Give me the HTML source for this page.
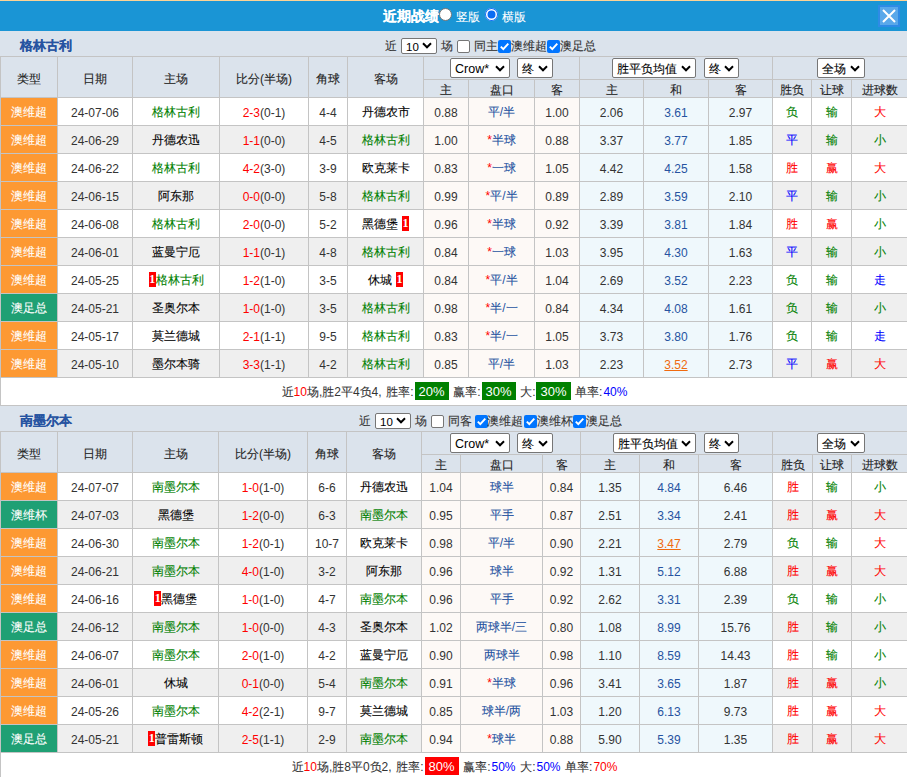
<!DOCTYPE html><html><head><meta charset="utf-8"><style>
*{margin:0;padding:0;box-sizing:border-box}
html,body{width:907px;height:777px;overflow:hidden;background:#fff}
body{position:relative;font-family:"Liberation Sans",sans-serif;font-size:12px;color:#333}
.a{position:absolute}
.k{-webkit-text-stroke:0.1px currentColor}
.c{width:100%;height:100%;display:flex;align-items:center;justify-content:center;white-space:nowrap;padding-top:2px}
.h .c{padding-top:3px}
.t{position:absolute;white-space:nowrap;line-height:14px}
.sel{position:absolute;background:#fff;border:1px solid #767676;border-radius:2px;color:#000;white-space:nowrap;line-height:16px;overflow:hidden}
.sel .st{position:absolute;left:5px;top:0}
.chev{position:absolute}
.cbu{position:absolute;width:13px;height:13px;border:1px solid #767676;border-radius:2px;background:#fff}
.cbc{position:absolute;width:13px;height:13px;border-radius:2px;background:#0075ff}
.cbc svg{position:absolute;left:0;top:0}
.g{color:#008000}.r{color:#f00}.b{color:#0000ff}.hb{color:#2653a1}
.nb{display:inline-block;background:#f00;color:#fff;width:7px;height:15px;line-height:15px;text-align:center;font-family:"Liberation Serif",serif;font-size:12px;font-weight:bold;vertical-align:top;overflow:hidden;text-indent:0.5px}
</style></head><body>

<div class="a" style="left:0px;top:0px;width:907px;height:1px;background:#fcd395;"></div>
<div class="a" style="left:0px;top:1px;width:907px;height:30px;background:#1a95d5;"></div>
<div class="t" style="left:383px;top:9px;color:#fff;font-weight:bold;font-size:14px;line-height:15px;-webkit-text-stroke:0.2px #fff"><span class="k">近期战绩</span></div>
<div class="a" style="left:439px;top:8px;width:13px;height:13px;border-radius:50%;background:#fff;border:1px solid #767676"></div>
<div class="t" style="left:456px;top:10px;color:#fff;font-size:12px"><span class="k">竖版</span></div>
<div class="a" style="left:485px;top:8px;width:13px;height:13px;border-radius:50%;background:#0b6cf3;box-shadow:inset 0 0 0 1px #0b6cf3, inset 0 0 0 2.5px #fff"></div>
<div class="t" style="left:502px;top:10px;color:#fff;font-size:12px"><span class="k">横版</span></div>
<div class="a" style="left:878px;top:5px;width:22px;height:22px;background:#5aa8ea;border:2px solid #2e8be6"></div>
<svg class="a" style="left:878px;top:5px" width="22" height="22" viewBox="0 0 22 22"><path d="M5 5 L17 17 M17 5 L5 17" stroke="#fff" stroke-width="2"/></svg>
<div class="a" style="left:0px;top:31px;width:907px;height:25px;background:#dbe3ec;"></div>
<div class="t" style="left:20px;top:38px;color:#2653a1;font-weight:bold;font-size:13px;line-height:15px"><span class="k">格林古利</span></div>
<div class="t" style="left:385px;top:39px;"><span class="k">近</span></div>
<div class="sel s10" style="left:401px;top:38px;width:36px;height:16px;font-size:11.5px"><span class="st" style="left:4px;top:0px;font-family:"Liberation Serif",serif">10</span><svg class="chev" width="10" height="7" viewBox="0 0 10 7" style="left:20px;top:3px"><path d="M1 1.3 L5 5.3 L9 1.3" fill="none" stroke="#000" stroke-width="2"/></svg></div>
<div class="t" style="left:441px;top:39px;"><span class="k">场</span></div>
<div class="cbu" style="left:457px;top:40px"></div>
<div class="t" style="left:474px;top:39px;"><span class="k">同主</span></div>
<div class="cbc" style="left:498px;top:40px"><svg width="13" height="13" viewBox="0 0 13 13"><path d="M2.8 6.6 L5.3 9.2 L10.3 3.6" fill="none" stroke="#fff" stroke-width="1.9"/></svg></div>
<div class="t" style="left:511px;top:39px;"><span class="k">澳维超</span></div>
<div class="cbc" style="left:547px;top:40px"><svg width="13" height="13" viewBox="0 0 13 13"><path d="M2.8 6.6 L5.3 9.2 L10.3 3.6" fill="none" stroke="#fff" stroke-width="1.9"/></svg></div>
<div class="t" style="left:560px;top:39px;"><span class="k">澳足总</span></div>
<div class="a" style="left:0px;top:56px;width:907px;height:350px;background:#c4c4c4;"></div>
<div class="a" style="left:1px;top:57px;width:56px;height:40px;background:#dbe3ec;"><div class="c" style="padding-top:4px"><span><span style="color:#222"><span class="k">类型</span></span></span></div></div>
<div class="a" style="left:58px;top:57px;width:74px;height:40px;background:#dbe3ec;"><div class="c" style="padding-top:4px"><span><span style="color:#222"><span class="k">日期</span></span></span></div></div>
<div class="a" style="left:133px;top:57px;width:86px;height:40px;background:#dbe3ec;"><div class="c" style="padding-top:4px"><span><span style="color:#222"><span class="k">主场</span></span></span></div></div>
<div class="a" style="left:220px;top:57px;width:88px;height:40px;background:#dbe3ec;"><div class="c" style="padding-top:4px"><span><span style="color:#222"><span class="k">比分</span>(<span class="k">半场</span>)</span></span></div></div>
<div class="a" style="left:309px;top:57px;width:38px;height:40px;background:#dbe3ec;"><div class="c" style="padding-top:4px"><span><span style="color:#222"><span class="k">角球</span></span></span></div></div>
<div class="a" style="left:348px;top:57px;width:75px;height:40px;background:#dbe3ec;"><div class="c" style="padding-top:4px"><span><span style="color:#222"><span class="k">客场</span></span></span></div></div>
<div class="a" style="left:424px;top:57px;width:155px;height:22px;background:#dbe3ec;"><div class="c" style="padding-top:2px"><span></span></div></div>
<div class="a" style="left:580px;top:57px;width:192px;height:22px;background:#dbe3ec;"><div class="c" style="padding-top:2px"><span></span></div></div>
<div class="a" style="left:773px;top:57px;width:135px;height:22px;background:#dbe3ec;"><div class="c" style="padding-top:2px"><span></span></div></div>
<div class="a" style="left:424px;top:80px;width:44px;height:17px;background:#dbe3ec;"><div class="c" style="padding-top:3px"><span><span style="color:#222"><span class="k">主</span></span></span></div></div>
<div class="a" style="left:469px;top:80px;width:65px;height:17px;background:#dbe3ec;"><div class="c" style="padding-top:3px"><span><span style="color:#222"><span class="k">盘口</span></span></span></div></div>
<div class="a" style="left:535px;top:80px;width:44px;height:17px;background:#dbe3ec;"><div class="c" style="padding-top:3px"><span><span style="color:#222"><span class="k">客</span></span></span></div></div>
<div class="a" style="left:580px;top:80px;width:63px;height:17px;background:#dbe3ec;"><div class="c" style="padding-top:3px"><span><span style="color:#222"><span class="k">主</span></span></span></div></div>
<div class="a" style="left:644px;top:80px;width:64px;height:17px;background:#dbe3ec;"><div class="c" style="padding-top:3px"><span><span style="color:#222"><span class="k">和</span></span></span></div></div>
<div class="a" style="left:709px;top:80px;width:63px;height:17px;background:#dbe3ec;"><div class="c" style="padding-top:3px"><span><span style="color:#222"><span class="k">客</span></span></span></div></div>
<div class="a" style="left:773px;top:80px;width:38px;height:17px;background:#dbe3ec;"><div class="c" style="padding-top:3px"><span><span style="color:#222"><span class="k">胜负</span></span></span></div></div>
<div class="a" style="left:812px;top:80px;width:39px;height:17px;background:#dbe3ec;"><div class="c" style="padding-top:3px"><span><span style="color:#222"><span class="k">让球</span></span></span></div></div>
<div class="a" style="left:852px;top:80px;width:56px;height:17px;background:#dbe3ec;"><div class="c" style="padding-top:3px"><span><span style="color:#222"><span class="k">进球数</span></span></span></div></div>
<div class="sel" style="left:450px;top:58px;width:60px;height:20px;font-size:12.5px"><span class="st" style="left:4px;top:2px;">Crow*</span><svg class="chev" width="10" height="7" viewBox="0 0 10 7" style="left:44px;top:6px"><path d="M1 1.3 L5 5.3 L9 1.3" fill="none" stroke="#000" stroke-width="2"/></svg></div>
<div class="sel" style="left:517px;top:58px;width:36px;height:20px;font-size:12px"><span class="st" style="left:4px;top:1.5px;"><span class="k">终</span></span><svg class="chev" width="10" height="7" viewBox="0 0 10 7" style="left:20px;top:6px"><path d="M1 1.3 L5 5.3 L9 1.3" fill="none" stroke="#000" stroke-width="2"/></svg></div>
<div class="sel" style="left:612px;top:58px;width:84px;height:20px;font-size:12px"><span class="st" style="left:4px;top:1.5px;"><span class="k">胜平负均值</span></span><svg class="chev" width="10" height="7" viewBox="0 0 10 7" style="left:68px;top:6px"><path d="M1 1.3 L5 5.3 L9 1.3" fill="none" stroke="#000" stroke-width="2"/></svg></div>
<div class="sel" style="left:704px;top:58px;width:35px;height:20px;font-size:12px"><span class="st" style="left:4px;top:1.5px;"><span class="k">终</span></span><svg class="chev" width="10" height="7" viewBox="0 0 10 7" style="left:19px;top:6px"><path d="M1 1.3 L5 5.3 L9 1.3" fill="none" stroke="#000" stroke-width="2"/></svg></div>
<div class="sel" style="left:817px;top:58px;width:48px;height:20px;font-size:12px"><span class="st" style="left:4px;top:1.5px;"><span class="k">全场</span></span><svg class="chev" width="10" height="7" viewBox="0 0 10 7" style="left:32px;top:6px"><path d="M1 1.3 L5 5.3 L9 1.3" fill="none" stroke="#000" stroke-width="2"/></svg></div>
<div class="a" style="left:1px;top:98px;width:56px;height:27px;background:#fd9933;"><div class="c" style="padding-top:2px"><span><span style="color:#fff"><span class="k">澳维超</span></span></span></div></div>
<div class="a" style="left:58px;top:98px;width:74px;height:27px;background:#ffffff;"><div class="c" style="padding-top:2px"><span>24-07-06</span></div></div>
<div class="a" style="left:133px;top:98px;width:86px;height:27px;background:#ffffff;"><div class="c" style="padding-top:2px"><span><span class="g"><span class="k">格林古利</span></span></span></div></div>
<div class="a" style="left:220px;top:98px;width:88px;height:27px;background:#ffffff;"><div class="c" style="padding-top:2px"><span><span class="r">2-3</span>(0-1)</span></div></div>
<div class="a" style="left:309px;top:98px;width:38px;height:27px;background:#ffffff;"><div class="c" style="padding-top:2px"><span>4-4</span></div></div>
<div class="a" style="left:348px;top:98px;width:75px;height:27px;background:#ffffff;"><div class="c" style="padding-top:2px"><span><span style="color:#000"><span class="k">丹德农市</span></span></span></div></div>
<div class="a" style="left:424px;top:98px;width:44px;height:27px;background:#fdf9f6;"><div class="c" style="padding-top:2px"><span>0.88</span></div></div>
<div class="a" style="left:469px;top:98px;width:65px;height:27px;background:#fdf9f6;"><div class="c" style="padding-top:2px"><span><span class="hb"><span class="k">平</span>/<span class="k">半</span></span></span></div></div>
<div class="a" style="left:535px;top:98px;width:44px;height:27px;background:#fdf9f6;"><div class="c" style="padding-top:2px"><span>1.00</span></div></div>
<div class="a" style="left:580px;top:98px;width:63px;height:27px;background:#eff8fc;"><div class="c" style="padding-top:2px"><span>2.06</span></div></div>
<div class="a" style="left:644px;top:98px;width:64px;height:27px;background:#eff8fc;"><div class="c" style="padding-top:2px"><span><span class="hb">3.61</span></span></div></div>
<div class="a" style="left:709px;top:98px;width:63px;height:27px;background:#eff8fc;"><div class="c" style="padding-top:2px"><span>2.97</span></div></div>
<div class="a" style="left:773px;top:98px;width:38px;height:27px;background:#ffffff;"><div class="c" style="padding-top:2px"><span><span class="g"><span class="k">负</span></span></span></div></div>
<div class="a" style="left:812px;top:98px;width:39px;height:27px;background:#ffffff;"><div class="c" style="padding-top:2px"><span><span class="g"><span class="k">输</span></span></span></div></div>
<div class="a" style="left:852px;top:98px;width:56px;height:27px;background:#ffffff;"><div class="c" style="padding-top:2px"><span><span class="r"><span class="k">大</span></span></span></div></div>
<div class="a" style="left:1px;top:126px;width:56px;height:27px;background:#fd9933;"><div class="c" style="padding-top:2px"><span><span style="color:#fff"><span class="k">澳维超</span></span></span></div></div>
<div class="a" style="left:58px;top:126px;width:74px;height:27px;background:#efefef;"><div class="c" style="padding-top:2px"><span>24-06-29</span></div></div>
<div class="a" style="left:133px;top:126px;width:86px;height:27px;background:#efefef;"><div class="c" style="padding-top:2px"><span><span style="color:#000"><span class="k">丹德农迅</span></span></span></div></div>
<div class="a" style="left:220px;top:126px;width:88px;height:27px;background:#efefef;"><div class="c" style="padding-top:2px"><span><span class="r">1-1</span>(0-0)</span></div></div>
<div class="a" style="left:309px;top:126px;width:38px;height:27px;background:#efefef;"><div class="c" style="padding-top:2px"><span>4-5</span></div></div>
<div class="a" style="left:348px;top:126px;width:75px;height:27px;background:#efefef;"><div class="c" style="padding-top:2px"><span><span class="g"><span class="k">格林古利</span></span></span></div></div>
<div class="a" style="left:424px;top:126px;width:44px;height:27px;background:#fdf9f6;"><div class="c" style="padding-top:2px"><span>1.00</span></div></div>
<div class="a" style="left:469px;top:126px;width:65px;height:27px;background:#fdf9f6;"><div class="c" style="padding-top:2px"><span><span class="r">*</span><span class="hb"><span class="k">半球</span></span></span></div></div>
<div class="a" style="left:535px;top:126px;width:44px;height:27px;background:#fdf9f6;"><div class="c" style="padding-top:2px"><span>0.88</span></div></div>
<div class="a" style="left:580px;top:126px;width:63px;height:27px;background:#eff8fc;"><div class="c" style="padding-top:2px"><span>3.37</span></div></div>
<div class="a" style="left:644px;top:126px;width:64px;height:27px;background:#eff8fc;"><div class="c" style="padding-top:2px"><span><span class="hb">3.77</span></span></div></div>
<div class="a" style="left:709px;top:126px;width:63px;height:27px;background:#eff8fc;"><div class="c" style="padding-top:2px"><span>1.85</span></div></div>
<div class="a" style="left:773px;top:126px;width:38px;height:27px;background:#efefef;"><div class="c" style="padding-top:2px"><span><span class="b"><span class="k">平</span></span></span></div></div>
<div class="a" style="left:812px;top:126px;width:39px;height:27px;background:#efefef;"><div class="c" style="padding-top:2px"><span><span class="g"><span class="k">输</span></span></span></div></div>
<div class="a" style="left:852px;top:126px;width:56px;height:27px;background:#efefef;"><div class="c" style="padding-top:2px"><span><span class="g"><span class="k">小</span></span></span></div></div>
<div class="a" style="left:1px;top:154px;width:56px;height:27px;background:#fd9933;"><div class="c" style="padding-top:2px"><span><span style="color:#fff"><span class="k">澳维超</span></span></span></div></div>
<div class="a" style="left:58px;top:154px;width:74px;height:27px;background:#ffffff;"><div class="c" style="padding-top:2px"><span>24-06-22</span></div></div>
<div class="a" style="left:133px;top:154px;width:86px;height:27px;background:#ffffff;"><div class="c" style="padding-top:2px"><span><span class="g"><span class="k">格林古利</span></span></span></div></div>
<div class="a" style="left:220px;top:154px;width:88px;height:27px;background:#ffffff;"><div class="c" style="padding-top:2px"><span><span class="r">4-2</span>(3-0)</span></div></div>
<div class="a" style="left:309px;top:154px;width:38px;height:27px;background:#ffffff;"><div class="c" style="padding-top:2px"><span>3-9</span></div></div>
<div class="a" style="left:348px;top:154px;width:75px;height:27px;background:#ffffff;"><div class="c" style="padding-top:2px"><span><span style="color:#000"><span class="k">欧克莱卡</span></span></span></div></div>
<div class="a" style="left:424px;top:154px;width:44px;height:27px;background:#fdf9f6;"><div class="c" style="padding-top:2px"><span>0.83</span></div></div>
<div class="a" style="left:469px;top:154px;width:65px;height:27px;background:#fdf9f6;"><div class="c" style="padding-top:2px"><span><span class="r">*</span><span class="hb"><span class="k">一球</span></span></span></div></div>
<div class="a" style="left:535px;top:154px;width:44px;height:27px;background:#fdf9f6;"><div class="c" style="padding-top:2px"><span>1.05</span></div></div>
<div class="a" style="left:580px;top:154px;width:63px;height:27px;background:#eff8fc;"><div class="c" style="padding-top:2px"><span>4.42</span></div></div>
<div class="a" style="left:644px;top:154px;width:64px;height:27px;background:#eff8fc;"><div class="c" style="padding-top:2px"><span><span class="hb">4.25</span></span></div></div>
<div class="a" style="left:709px;top:154px;width:63px;height:27px;background:#eff8fc;"><div class="c" style="padding-top:2px"><span>1.58</span></div></div>
<div class="a" style="left:773px;top:154px;width:38px;height:27px;background:#ffffff;"><div class="c" style="padding-top:2px"><span><span class="r"><span class="k">胜</span></span></span></div></div>
<div class="a" style="left:812px;top:154px;width:39px;height:27px;background:#ffffff;"><div class="c" style="padding-top:2px"><span><span class="r"><span class="k">赢</span></span></span></div></div>
<div class="a" style="left:852px;top:154px;width:56px;height:27px;background:#ffffff;"><div class="c" style="padding-top:2px"><span><span class="r"><span class="k">大</span></span></span></div></div>
<div class="a" style="left:1px;top:182px;width:56px;height:27px;background:#fd9933;"><div class="c" style="padding-top:2px"><span><span style="color:#fff"><span class="k">澳维超</span></span></span></div></div>
<div class="a" style="left:58px;top:182px;width:74px;height:27px;background:#efefef;"><div class="c" style="padding-top:2px"><span>24-06-15</span></div></div>
<div class="a" style="left:133px;top:182px;width:86px;height:27px;background:#efefef;"><div class="c" style="padding-top:2px"><span><span style="color:#000"><span class="k">阿东那</span></span></span></div></div>
<div class="a" style="left:220px;top:182px;width:88px;height:27px;background:#efefef;"><div class="c" style="padding-top:2px"><span><span class="r">0-0</span>(0-0)</span></div></div>
<div class="a" style="left:309px;top:182px;width:38px;height:27px;background:#efefef;"><div class="c" style="padding-top:2px"><span>5-8</span></div></div>
<div class="a" style="left:348px;top:182px;width:75px;height:27px;background:#efefef;"><div class="c" style="padding-top:2px"><span><span class="g"><span class="k">格林古利</span></span></span></div></div>
<div class="a" style="left:424px;top:182px;width:44px;height:27px;background:#fdf9f6;"><div class="c" style="padding-top:2px"><span>0.99</span></div></div>
<div class="a" style="left:469px;top:182px;width:65px;height:27px;background:#fdf9f6;"><div class="c" style="padding-top:2px"><span><span class="r">*</span><span class="hb"><span class="k">平</span>/<span class="k">半</span></span></span></div></div>
<div class="a" style="left:535px;top:182px;width:44px;height:27px;background:#fdf9f6;"><div class="c" style="padding-top:2px"><span>0.89</span></div></div>
<div class="a" style="left:580px;top:182px;width:63px;height:27px;background:#eff8fc;"><div class="c" style="padding-top:2px"><span>2.89</span></div></div>
<div class="a" style="left:644px;top:182px;width:64px;height:27px;background:#eff8fc;"><div class="c" style="padding-top:2px"><span><span class="hb">3.59</span></span></div></div>
<div class="a" style="left:709px;top:182px;width:63px;height:27px;background:#eff8fc;"><div class="c" style="padding-top:2px"><span>2.10</span></div></div>
<div class="a" style="left:773px;top:182px;width:38px;height:27px;background:#efefef;"><div class="c" style="padding-top:2px"><span><span class="b"><span class="k">平</span></span></span></div></div>
<div class="a" style="left:812px;top:182px;width:39px;height:27px;background:#efefef;"><div class="c" style="padding-top:2px"><span><span class="g"><span class="k">输</span></span></span></div></div>
<div class="a" style="left:852px;top:182px;width:56px;height:27px;background:#efefef;"><div class="c" style="padding-top:2px"><span><span class="g"><span class="k">小</span></span></span></div></div>
<div class="a" style="left:1px;top:210px;width:56px;height:27px;background:#fd9933;"><div class="c" style="padding-top:2px"><span><span style="color:#fff"><span class="k">澳维超</span></span></span></div></div>
<div class="a" style="left:58px;top:210px;width:74px;height:27px;background:#ffffff;"><div class="c" style="padding-top:2px"><span>24-06-08</span></div></div>
<div class="a" style="left:133px;top:210px;width:86px;height:27px;background:#ffffff;"><div class="c" style="padding-top:2px"><span><span class="g"><span class="k">格林古利</span></span></span></div></div>
<div class="a" style="left:220px;top:210px;width:88px;height:27px;background:#ffffff;"><div class="c" style="padding-top:2px"><span><span class="r">2-0</span>(0-0)</span></div></div>
<div class="a" style="left:309px;top:210px;width:38px;height:27px;background:#ffffff;"><div class="c" style="padding-top:2px"><span>5-2</span></div></div>
<div class="a" style="left:348px;top:210px;width:75px;height:27px;background:#ffffff;"><div class="c" style="padding-top:2px"><span><span style="color:#000"><span class="k">黑德堡</span> <span class="nb">1</span></span></span></div></div>
<div class="a" style="left:424px;top:210px;width:44px;height:27px;background:#fdf9f6;"><div class="c" style="padding-top:2px"><span>0.96</span></div></div>
<div class="a" style="left:469px;top:210px;width:65px;height:27px;background:#fdf9f6;"><div class="c" style="padding-top:2px"><span><span class="r">*</span><span class="hb"><span class="k">半球</span></span></span></div></div>
<div class="a" style="left:535px;top:210px;width:44px;height:27px;background:#fdf9f6;"><div class="c" style="padding-top:2px"><span>0.92</span></div></div>
<div class="a" style="left:580px;top:210px;width:63px;height:27px;background:#eff8fc;"><div class="c" style="padding-top:2px"><span>3.39</span></div></div>
<div class="a" style="left:644px;top:210px;width:64px;height:27px;background:#eff8fc;"><div class="c" style="padding-top:2px"><span><span class="hb">3.81</span></span></div></div>
<div class="a" style="left:709px;top:210px;width:63px;height:27px;background:#eff8fc;"><div class="c" style="padding-top:2px"><span>1.84</span></div></div>
<div class="a" style="left:773px;top:210px;width:38px;height:27px;background:#ffffff;"><div class="c" style="padding-top:2px"><span><span class="r"><span class="k">胜</span></span></span></div></div>
<div class="a" style="left:812px;top:210px;width:39px;height:27px;background:#ffffff;"><div class="c" style="padding-top:2px"><span><span class="r"><span class="k">赢</span></span></span></div></div>
<div class="a" style="left:852px;top:210px;width:56px;height:27px;background:#ffffff;"><div class="c" style="padding-top:2px"><span><span class="g"><span class="k">小</span></span></span></div></div>
<div class="a" style="left:1px;top:238px;width:56px;height:27px;background:#fd9933;"><div class="c" style="padding-top:2px"><span><span style="color:#fff"><span class="k">澳维超</span></span></span></div></div>
<div class="a" style="left:58px;top:238px;width:74px;height:27px;background:#efefef;"><div class="c" style="padding-top:2px"><span>24-06-01</span></div></div>
<div class="a" style="left:133px;top:238px;width:86px;height:27px;background:#efefef;"><div class="c" style="padding-top:2px"><span><span style="color:#000"><span class="k">蓝曼宁厄</span></span></span></div></div>
<div class="a" style="left:220px;top:238px;width:88px;height:27px;background:#efefef;"><div class="c" style="padding-top:2px"><span><span class="r">1-1</span>(0-1)</span></div></div>
<div class="a" style="left:309px;top:238px;width:38px;height:27px;background:#efefef;"><div class="c" style="padding-top:2px"><span>4-8</span></div></div>
<div class="a" style="left:348px;top:238px;width:75px;height:27px;background:#efefef;"><div class="c" style="padding-top:2px"><span><span class="g"><span class="k">格林古利</span></span></span></div></div>
<div class="a" style="left:424px;top:238px;width:44px;height:27px;background:#fdf9f6;"><div class="c" style="padding-top:2px"><span>0.84</span></div></div>
<div class="a" style="left:469px;top:238px;width:65px;height:27px;background:#fdf9f6;"><div class="c" style="padding-top:2px"><span><span class="r">*</span><span class="hb"><span class="k">一球</span></span></span></div></div>
<div class="a" style="left:535px;top:238px;width:44px;height:27px;background:#fdf9f6;"><div class="c" style="padding-top:2px"><span>1.03</span></div></div>
<div class="a" style="left:580px;top:238px;width:63px;height:27px;background:#eff8fc;"><div class="c" style="padding-top:2px"><span>3.95</span></div></div>
<div class="a" style="left:644px;top:238px;width:64px;height:27px;background:#eff8fc;"><div class="c" style="padding-top:2px"><span><span class="hb">4.30</span></span></div></div>
<div class="a" style="left:709px;top:238px;width:63px;height:27px;background:#eff8fc;"><div class="c" style="padding-top:2px"><span>1.63</span></div></div>
<div class="a" style="left:773px;top:238px;width:38px;height:27px;background:#efefef;"><div class="c" style="padding-top:2px"><span><span class="b"><span class="k">平</span></span></span></div></div>
<div class="a" style="left:812px;top:238px;width:39px;height:27px;background:#efefef;"><div class="c" style="padding-top:2px"><span><span class="g"><span class="k">输</span></span></span></div></div>
<div class="a" style="left:852px;top:238px;width:56px;height:27px;background:#efefef;"><div class="c" style="padding-top:2px"><span><span class="g"><span class="k">小</span></span></span></div></div>
<div class="a" style="left:1px;top:266px;width:56px;height:27px;background:#fd9933;"><div class="c" style="padding-top:2px"><span><span style="color:#fff"><span class="k">澳维超</span></span></span></div></div>
<div class="a" style="left:58px;top:266px;width:74px;height:27px;background:#ffffff;"><div class="c" style="padding-top:2px"><span>24-05-25</span></div></div>
<div class="a" style="left:133px;top:266px;width:86px;height:27px;background:#ffffff;"><div class="c" style="padding-top:2px"><span><span class="nb">1</span><span class="g"><span class="k">格林古利</span></span></span></div></div>
<div class="a" style="left:220px;top:266px;width:88px;height:27px;background:#ffffff;"><div class="c" style="padding-top:2px"><span><span class="r">1-2</span>(1-0)</span></div></div>
<div class="a" style="left:309px;top:266px;width:38px;height:27px;background:#ffffff;"><div class="c" style="padding-top:2px"><span>3-5</span></div></div>
<div class="a" style="left:348px;top:266px;width:75px;height:27px;background:#ffffff;"><div class="c" style="padding-top:2px"><span><span style="color:#000"><span class="k">休城</span> <span class="nb">1</span></span></span></div></div>
<div class="a" style="left:424px;top:266px;width:44px;height:27px;background:#fdf9f6;"><div class="c" style="padding-top:2px"><span>0.84</span></div></div>
<div class="a" style="left:469px;top:266px;width:65px;height:27px;background:#fdf9f6;"><div class="c" style="padding-top:2px"><span><span class="r">*</span><span class="hb"><span class="k">平</span>/<span class="k">半</span></span></span></div></div>
<div class="a" style="left:535px;top:266px;width:44px;height:27px;background:#fdf9f6;"><div class="c" style="padding-top:2px"><span>1.04</span></div></div>
<div class="a" style="left:580px;top:266px;width:63px;height:27px;background:#eff8fc;"><div class="c" style="padding-top:2px"><span>2.69</span></div></div>
<div class="a" style="left:644px;top:266px;width:64px;height:27px;background:#eff8fc;"><div class="c" style="padding-top:2px"><span><span class="hb">3.52</span></span></div></div>
<div class="a" style="left:709px;top:266px;width:63px;height:27px;background:#eff8fc;"><div class="c" style="padding-top:2px"><span>2.23</span></div></div>
<div class="a" style="left:773px;top:266px;width:38px;height:27px;background:#ffffff;"><div class="c" style="padding-top:2px"><span><span class="g"><span class="k">负</span></span></span></div></div>
<div class="a" style="left:812px;top:266px;width:39px;height:27px;background:#ffffff;"><div class="c" style="padding-top:2px"><span><span class="g"><span class="k">输</span></span></span></div></div>
<div class="a" style="left:852px;top:266px;width:56px;height:27px;background:#ffffff;"><div class="c" style="padding-top:2px"><span><span class="b"><span class="k">走</span></span></span></div></div>
<div class="a" style="left:1px;top:294px;width:56px;height:27px;background:#1fa074;"><div class="c" style="padding-top:2px"><span><span style="color:#fff"><span class="k">澳足总</span></span></span></div></div>
<div class="a" style="left:58px;top:294px;width:74px;height:27px;background:#efefef;"><div class="c" style="padding-top:2px"><span>24-05-21</span></div></div>
<div class="a" style="left:133px;top:294px;width:86px;height:27px;background:#efefef;"><div class="c" style="padding-top:2px"><span><span style="color:#000"><span class="k">圣奥尔本</span></span></span></div></div>
<div class="a" style="left:220px;top:294px;width:88px;height:27px;background:#efefef;"><div class="c" style="padding-top:2px"><span><span class="r">1-0</span>(1-0)</span></div></div>
<div class="a" style="left:309px;top:294px;width:38px;height:27px;background:#efefef;"><div class="c" style="padding-top:2px"><span>3-5</span></div></div>
<div class="a" style="left:348px;top:294px;width:75px;height:27px;background:#efefef;"><div class="c" style="padding-top:2px"><span><span class="g"><span class="k">格林古利</span></span></span></div></div>
<div class="a" style="left:424px;top:294px;width:44px;height:27px;background:#fdf9f6;"><div class="c" style="padding-top:2px"><span>0.98</span></div></div>
<div class="a" style="left:469px;top:294px;width:65px;height:27px;background:#fdf9f6;"><div class="c" style="padding-top:2px"><span><span class="r">*</span><span class="hb"><span class="k">半</span>/<span class="k">一</span></span></span></div></div>
<div class="a" style="left:535px;top:294px;width:44px;height:27px;background:#fdf9f6;"><div class="c" style="padding-top:2px"><span>0.84</span></div></div>
<div class="a" style="left:580px;top:294px;width:63px;height:27px;background:#eff8fc;"><div class="c" style="padding-top:2px"><span>4.34</span></div></div>
<div class="a" style="left:644px;top:294px;width:64px;height:27px;background:#eff8fc;"><div class="c" style="padding-top:2px"><span><span class="hb">4.08</span></span></div></div>
<div class="a" style="left:709px;top:294px;width:63px;height:27px;background:#eff8fc;"><div class="c" style="padding-top:2px"><span>1.61</span></div></div>
<div class="a" style="left:773px;top:294px;width:38px;height:27px;background:#efefef;"><div class="c" style="padding-top:2px"><span><span class="g"><span class="k">负</span></span></span></div></div>
<div class="a" style="left:812px;top:294px;width:39px;height:27px;background:#efefef;"><div class="c" style="padding-top:2px"><span><span class="g"><span class="k">输</span></span></span></div></div>
<div class="a" style="left:852px;top:294px;width:56px;height:27px;background:#efefef;"><div class="c" style="padding-top:2px"><span><span class="g"><span class="k">小</span></span></span></div></div>
<div class="a" style="left:1px;top:322px;width:56px;height:27px;background:#fd9933;"><div class="c" style="padding-top:2px"><span><span style="color:#fff"><span class="k">澳维超</span></span></span></div></div>
<div class="a" style="left:58px;top:322px;width:74px;height:27px;background:#ffffff;"><div class="c" style="padding-top:2px"><span>24-05-17</span></div></div>
<div class="a" style="left:133px;top:322px;width:86px;height:27px;background:#ffffff;"><div class="c" style="padding-top:2px"><span><span style="color:#000"><span class="k">莫兰德城</span></span></span></div></div>
<div class="a" style="left:220px;top:322px;width:88px;height:27px;background:#ffffff;"><div class="c" style="padding-top:2px"><span><span class="r">2-1</span>(1-1)</span></div></div>
<div class="a" style="left:309px;top:322px;width:38px;height:27px;background:#ffffff;"><div class="c" style="padding-top:2px"><span>9-5</span></div></div>
<div class="a" style="left:348px;top:322px;width:75px;height:27px;background:#ffffff;"><div class="c" style="padding-top:2px"><span><span class="g"><span class="k">格林古利</span></span></span></div></div>
<div class="a" style="left:424px;top:322px;width:44px;height:27px;background:#fdf9f6;"><div class="c" style="padding-top:2px"><span>0.83</span></div></div>
<div class="a" style="left:469px;top:322px;width:65px;height:27px;background:#fdf9f6;"><div class="c" style="padding-top:2px"><span><span class="r">*</span><span class="hb"><span class="k">半</span>/<span class="k">一</span></span></span></div></div>
<div class="a" style="left:535px;top:322px;width:44px;height:27px;background:#fdf9f6;"><div class="c" style="padding-top:2px"><span>1.05</span></div></div>
<div class="a" style="left:580px;top:322px;width:63px;height:27px;background:#eff8fc;"><div class="c" style="padding-top:2px"><span>3.73</span></div></div>
<div class="a" style="left:644px;top:322px;width:64px;height:27px;background:#eff8fc;"><div class="c" style="padding-top:2px"><span><span class="hb">3.80</span></span></div></div>
<div class="a" style="left:709px;top:322px;width:63px;height:27px;background:#eff8fc;"><div class="c" style="padding-top:2px"><span>1.76</span></div></div>
<div class="a" style="left:773px;top:322px;width:38px;height:27px;background:#ffffff;"><div class="c" style="padding-top:2px"><span><span class="g"><span class="k">负</span></span></span></div></div>
<div class="a" style="left:812px;top:322px;width:39px;height:27px;background:#ffffff;"><div class="c" style="padding-top:2px"><span><span class="g"><span class="k">输</span></span></span></div></div>
<div class="a" style="left:852px;top:322px;width:56px;height:27px;background:#ffffff;"><div class="c" style="padding-top:2px"><span><span class="b"><span class="k">走</span></span></span></div></div>
<div class="a" style="left:1px;top:350px;width:56px;height:27px;background:#fd9933;"><div class="c" style="padding-top:2px"><span><span style="color:#fff"><span class="k">澳维超</span></span></span></div></div>
<div class="a" style="left:58px;top:350px;width:74px;height:27px;background:#efefef;"><div class="c" style="padding-top:2px"><span>24-05-10</span></div></div>
<div class="a" style="left:133px;top:350px;width:86px;height:27px;background:#efefef;"><div class="c" style="padding-top:2px"><span><span style="color:#000"><span class="k">墨尔本骑</span></span></span></div></div>
<div class="a" style="left:220px;top:350px;width:88px;height:27px;background:#efefef;"><div class="c" style="padding-top:2px"><span><span class="r">3-3</span>(1-1)</span></div></div>
<div class="a" style="left:309px;top:350px;width:38px;height:27px;background:#efefef;"><div class="c" style="padding-top:2px"><span>4-2</span></div></div>
<div class="a" style="left:348px;top:350px;width:75px;height:27px;background:#efefef;"><div class="c" style="padding-top:2px"><span><span class="g"><span class="k">格林古利</span></span></span></div></div>
<div class="a" style="left:424px;top:350px;width:44px;height:27px;background:#fdf9f6;"><div class="c" style="padding-top:2px"><span>0.85</span></div></div>
<div class="a" style="left:469px;top:350px;width:65px;height:27px;background:#fdf9f6;"><div class="c" style="padding-top:2px"><span><span class="hb"><span class="k">平</span>/<span class="k">半</span></span></span></div></div>
<div class="a" style="left:535px;top:350px;width:44px;height:27px;background:#fdf9f6;"><div class="c" style="padding-top:2px"><span>1.03</span></div></div>
<div class="a" style="left:580px;top:350px;width:63px;height:27px;background:#eff8fc;"><div class="c" style="padding-top:2px"><span>2.23</span></div></div>
<div class="a" style="left:644px;top:350px;width:64px;height:27px;background:#eff8fc;"><div class="c" style="padding-top:2px"><span><span style="color:#f06a0f;text-decoration:underline">3.52</span></span></div></div>
<div class="a" style="left:709px;top:350px;width:63px;height:27px;background:#eff8fc;"><div class="c" style="padding-top:2px"><span>2.73</span></div></div>
<div class="a" style="left:773px;top:350px;width:38px;height:27px;background:#efefef;"><div class="c" style="padding-top:2px"><span><span class="b"><span class="k">平</span></span></span></div></div>
<div class="a" style="left:812px;top:350px;width:39px;height:27px;background:#efefef;"><div class="c" style="padding-top:2px"><span><span class="r"><span class="k">赢</span></span></span></div></div>
<div class="a" style="left:852px;top:350px;width:56px;height:27px;background:#efefef;"><div class="c" style="padding-top:2px"><span><span class="r"><span class="k">大</span></span></span></div></div>
<div class="a" style="left:1px;top:378px;width:907px;height:27px;background:#fff;"><div class="c" style="padding-top:2px"><span><span style="word-spacing:1.25px"><span class="k">近</span><span class="r">10</span><span class="k">场</span>,<span class="k">胜</span>2<span class="k">平</span>4<span class="k">负</span>4, <span class="k">胜率</span><span style="letter-spacing:1px">:</span><span style="display:inline-block;background:#008000;color:#fff;padding:0 4px;height:18px;line-height:20px;font-size:13px;position:relative;top:-1.5px;vertical-align:top">20%</span> <span class="k">赢率</span><span style="letter-spacing:1px">:</span><span style="display:inline-block;background:#008000;color:#fff;padding:0 4px;height:18px;line-height:20px;font-size:13px;position:relative;top:-1.5px;vertical-align:top">30%</span> <span class="k">大</span><span style="letter-spacing:1px">:</span><span style="display:inline-block;background:#008000;color:#fff;padding:0 4px;height:18px;line-height:20px;font-size:13px;position:relative;top:-1.5px;vertical-align:top">30%</span> <span class="k">单率</span><span style="letter-spacing:1px">:</span><span class="b">40%</span></span></span></div></div>
<div class="a" style="left:0px;top:406px;width:907px;height:25px;background:#dbe3ec;"></div>
<div class="t" style="left:20px;top:413px;color:#2653a1;font-weight:bold;font-size:13px;line-height:15px"><span class="k">南墨尔本</span></div>
<div class="t" style="left:359px;top:414px;"><span class="k">近</span></div>
<div class="sel s10" style="left:375px;top:413px;width:36px;height:16px;font-size:11.5px"><span class="st" style="left:4px;top:0px;font-family:"Liberation Serif",serif">10</span><svg class="chev" width="10" height="7" viewBox="0 0 10 7" style="left:20px;top:3px"><path d="M1 1.3 L5 5.3 L9 1.3" fill="none" stroke="#000" stroke-width="2"/></svg></div>
<div class="t" style="left:415px;top:414px;"><span class="k">场</span></div>
<div class="cbu" style="left:431px;top:415px"></div>
<div class="t" style="left:448px;top:414px;"><span class="k">同客</span></div>
<div class="cbc" style="left:475px;top:415px"><svg width="13" height="13" viewBox="0 0 13 13"><path d="M2.8 6.6 L5.3 9.2 L10.3 3.6" fill="none" stroke="#fff" stroke-width="1.9"/></svg></div>
<div class="t" style="left:487px;top:414px;"><span class="k">澳维超</span></div>
<div class="cbc" style="left:524px;top:415px"><svg width="13" height="13" viewBox="0 0 13 13"><path d="M2.8 6.6 L5.3 9.2 L10.3 3.6" fill="none" stroke="#fff" stroke-width="1.9"/></svg></div>
<div class="t" style="left:537px;top:414px;"><span class="k">澳维杯</span></div>
<div class="cbc" style="left:573px;top:415px"><svg width="13" height="13" viewBox="0 0 13 13"><path d="M2.8 6.6 L5.3 9.2 L10.3 3.6" fill="none" stroke="#fff" stroke-width="1.9"/></svg></div>
<div class="t" style="left:586px;top:414px;"><span class="k">澳足总</span></div>
<div class="a" style="left:0px;top:431px;width:907px;height:350px;background:#c4c4c4;"></div>
<div class="a" style="left:1px;top:432px;width:56px;height:40px;background:#dbe3ec;"><div class="c" style="padding-top:4px"><span><span style="color:#222"><span class="k">类型</span></span></span></div></div>
<div class="a" style="left:58px;top:432px;width:74px;height:40px;background:#dbe3ec;"><div class="c" style="padding-top:4px"><span><span style="color:#222"><span class="k">日期</span></span></span></div></div>
<div class="a" style="left:133px;top:432px;width:85px;height:40px;background:#dbe3ec;"><div class="c" style="padding-top:4px"><span><span style="color:#222"><span class="k">主场</span></span></span></div></div>
<div class="a" style="left:219px;top:432px;width:88px;height:40px;background:#dbe3ec;"><div class="c" style="padding-top:4px"><span><span style="color:#222"><span class="k">比分</span>(<span class="k">半场</span>)</span></span></div></div>
<div class="a" style="left:308px;top:432px;width:38px;height:40px;background:#dbe3ec;"><div class="c" style="padding-top:4px"><span><span style="color:#222"><span class="k">角球</span></span></span></div></div>
<div class="a" style="left:347px;top:432px;width:74px;height:40px;background:#dbe3ec;"><div class="c" style="padding-top:4px"><span><span style="color:#222"><span class="k">客场</span></span></span></div></div>
<div class="a" style="left:422px;top:432px;width:158px;height:22px;background:#dbe3ec;"><div class="c" style="padding-top:2px"><span></span></div></div>
<div class="a" style="left:581px;top:432px;width:191px;height:22px;background:#dbe3ec;"><div class="c" style="padding-top:2px"><span></span></div></div>
<div class="a" style="left:773px;top:432px;width:135px;height:22px;background:#dbe3ec;"><div class="c" style="padding-top:2px"><span></span></div></div>
<div class="a" style="left:422px;top:455px;width:38px;height:17px;background:#dbe3ec;"><div class="c" style="padding-top:3px"><span><span style="color:#222"><span class="k">主</span></span></span></div></div>
<div class="a" style="left:461px;top:455px;width:81px;height:17px;background:#dbe3ec;"><div class="c" style="padding-top:3px"><span><span style="color:#222"><span class="k">盘口</span></span></span></div></div>
<div class="a" style="left:543px;top:455px;width:37px;height:17px;background:#dbe3ec;"><div class="c" style="padding-top:3px"><span><span style="color:#222"><span class="k">客</span></span></span></div></div>
<div class="a" style="left:581px;top:455px;width:58px;height:17px;background:#dbe3ec;"><div class="c" style="padding-top:3px"><span><span style="color:#222"><span class="k">主</span></span></span></div></div>
<div class="a" style="left:640px;top:455px;width:58px;height:17px;background:#dbe3ec;"><div class="c" style="padding-top:3px"><span><span style="color:#222"><span class="k">和</span></span></span></div></div>
<div class="a" style="left:699px;top:455px;width:73px;height:17px;background:#dbe3ec;"><div class="c" style="padding-top:3px"><span><span style="color:#222"><span class="k">客</span></span></span></div></div>
<div class="a" style="left:773px;top:455px;width:39px;height:17px;background:#dbe3ec;"><div class="c" style="padding-top:3px"><span><span style="color:#222"><span class="k">胜负</span></span></span></div></div>
<div class="a" style="left:813px;top:455px;width:38px;height:17px;background:#dbe3ec;"><div class="c" style="padding-top:3px"><span><span style="color:#222"><span class="k">让球</span></span></span></div></div>
<div class="a" style="left:852px;top:455px;width:56px;height:17px;background:#dbe3ec;"><div class="c" style="padding-top:3px"><span><span style="color:#222"><span class="k">进球数</span></span></span></div></div>
<div class="sel" style="left:450px;top:433px;width:60px;height:20px;font-size:12.5px"><span class="st" style="left:4px;top:2px;">Crow*</span><svg class="chev" width="10" height="7" viewBox="0 0 10 7" style="left:44px;top:6px"><path d="M1 1.3 L5 5.3 L9 1.3" fill="none" stroke="#000" stroke-width="2"/></svg></div>
<div class="sel" style="left:517px;top:433px;width:36px;height:20px;font-size:12px"><span class="st" style="left:4px;top:1.5px;"><span class="k">终</span></span><svg class="chev" width="10" height="7" viewBox="0 0 10 7" style="left:20px;top:6px"><path d="M1 1.3 L5 5.3 L9 1.3" fill="none" stroke="#000" stroke-width="2"/></svg></div>
<div class="sel" style="left:613px;top:433px;width:83px;height:20px;font-size:12px"><span class="st" style="left:4px;top:1.5px;"><span class="k">胜平负均值</span></span><svg class="chev" width="10" height="7" viewBox="0 0 10 7" style="left:67px;top:6px"><path d="M1 1.3 L5 5.3 L9 1.3" fill="none" stroke="#000" stroke-width="2"/></svg></div>
<div class="sel" style="left:704px;top:433px;width:35px;height:20px;font-size:12px"><span class="st" style="left:4px;top:1.5px;"><span class="k">终</span></span><svg class="chev" width="10" height="7" viewBox="0 0 10 7" style="left:19px;top:6px"><path d="M1 1.3 L5 5.3 L9 1.3" fill="none" stroke="#000" stroke-width="2"/></svg></div>
<div class="sel" style="left:817px;top:433px;width:48px;height:20px;font-size:12px"><span class="st" style="left:4px;top:1.5px;"><span class="k">全场</span></span><svg class="chev" width="10" height="7" viewBox="0 0 10 7" style="left:32px;top:6px"><path d="M1 1.3 L5 5.3 L9 1.3" fill="none" stroke="#000" stroke-width="2"/></svg></div>
<div class="a" style="left:1px;top:473px;width:56px;height:27px;background:#fd9933;"><div class="c" style="padding-top:2px"><span><span style="color:#fff"><span class="k">澳维超</span></span></span></div></div>
<div class="a" style="left:58px;top:473px;width:74px;height:27px;background:#ffffff;"><div class="c" style="padding-top:2px"><span>24-07-07</span></div></div>
<div class="a" style="left:133px;top:473px;width:85px;height:27px;background:#ffffff;"><div class="c" style="padding-top:2px"><span><span class="g"><span class="k">南墨尔本</span></span></span></div></div>
<div class="a" style="left:219px;top:473px;width:88px;height:27px;background:#ffffff;"><div class="c" style="padding-top:2px"><span><span class="r">1-0</span>(1-0)</span></div></div>
<div class="a" style="left:308px;top:473px;width:38px;height:27px;background:#ffffff;"><div class="c" style="padding-top:2px"><span>6-6</span></div></div>
<div class="a" style="left:347px;top:473px;width:74px;height:27px;background:#ffffff;"><div class="c" style="padding-top:2px"><span><span style="color:#000"><span class="k">丹德农迅</span></span></span></div></div>
<div class="a" style="left:422px;top:473px;width:38px;height:27px;background:#fdf9f6;"><div class="c" style="padding-top:2px"><span>1.04</span></div></div>
<div class="a" style="left:461px;top:473px;width:81px;height:27px;background:#fdf9f6;"><div class="c" style="padding-top:2px"><span><span class="hb"><span class="k">球半</span></span></span></div></div>
<div class="a" style="left:543px;top:473px;width:37px;height:27px;background:#fdf9f6;"><div class="c" style="padding-top:2px"><span>0.84</span></div></div>
<div class="a" style="left:581px;top:473px;width:58px;height:27px;background:#eff8fc;"><div class="c" style="padding-top:2px"><span>1.35</span></div></div>
<div class="a" style="left:640px;top:473px;width:58px;height:27px;background:#eff8fc;"><div class="c" style="padding-top:2px"><span><span class="hb">4.84</span></span></div></div>
<div class="a" style="left:699px;top:473px;width:73px;height:27px;background:#eff8fc;"><div class="c" style="padding-top:2px"><span>6.46</span></div></div>
<div class="a" style="left:773px;top:473px;width:39px;height:27px;background:#ffffff;"><div class="c" style="padding-top:2px"><span><span class="r"><span class="k">胜</span></span></span></div></div>
<div class="a" style="left:813px;top:473px;width:38px;height:27px;background:#ffffff;"><div class="c" style="padding-top:2px"><span><span class="g"><span class="k">输</span></span></span></div></div>
<div class="a" style="left:852px;top:473px;width:56px;height:27px;background:#ffffff;"><div class="c" style="padding-top:2px"><span><span class="g"><span class="k">小</span></span></span></div></div>
<div class="a" style="left:1px;top:501px;width:56px;height:27px;background:#1fa074;"><div class="c" style="padding-top:2px"><span><span style="color:#fff"><span class="k">澳维杯</span></span></span></div></div>
<div class="a" style="left:58px;top:501px;width:74px;height:27px;background:#efefef;"><div class="c" style="padding-top:2px"><span>24-07-03</span></div></div>
<div class="a" style="left:133px;top:501px;width:85px;height:27px;background:#efefef;"><div class="c" style="padding-top:2px"><span><span style="color:#000"><span class="k">黑德堡</span></span></span></div></div>
<div class="a" style="left:219px;top:501px;width:88px;height:27px;background:#efefef;"><div class="c" style="padding-top:2px"><span><span class="r">1-2</span>(0-0)</span></div></div>
<div class="a" style="left:308px;top:501px;width:38px;height:27px;background:#efefef;"><div class="c" style="padding-top:2px"><span>6-3</span></div></div>
<div class="a" style="left:347px;top:501px;width:74px;height:27px;background:#efefef;"><div class="c" style="padding-top:2px"><span><span class="g"><span class="k">南墨尔本</span></span></span></div></div>
<div class="a" style="left:422px;top:501px;width:38px;height:27px;background:#fdf9f6;"><div class="c" style="padding-top:2px"><span>0.95</span></div></div>
<div class="a" style="left:461px;top:501px;width:81px;height:27px;background:#fdf9f6;"><div class="c" style="padding-top:2px"><span><span class="hb"><span class="k">平手</span></span></span></div></div>
<div class="a" style="left:543px;top:501px;width:37px;height:27px;background:#fdf9f6;"><div class="c" style="padding-top:2px"><span>0.87</span></div></div>
<div class="a" style="left:581px;top:501px;width:58px;height:27px;background:#eff8fc;"><div class="c" style="padding-top:2px"><span>2.51</span></div></div>
<div class="a" style="left:640px;top:501px;width:58px;height:27px;background:#eff8fc;"><div class="c" style="padding-top:2px"><span><span class="hb">3.34</span></span></div></div>
<div class="a" style="left:699px;top:501px;width:73px;height:27px;background:#eff8fc;"><div class="c" style="padding-top:2px"><span>2.41</span></div></div>
<div class="a" style="left:773px;top:501px;width:39px;height:27px;background:#efefef;"><div class="c" style="padding-top:2px"><span><span class="r"><span class="k">胜</span></span></span></div></div>
<div class="a" style="left:813px;top:501px;width:38px;height:27px;background:#efefef;"><div class="c" style="padding-top:2px"><span><span class="r"><span class="k">赢</span></span></span></div></div>
<div class="a" style="left:852px;top:501px;width:56px;height:27px;background:#efefef;"><div class="c" style="padding-top:2px"><span><span class="r"><span class="k">大</span></span></span></div></div>
<div class="a" style="left:1px;top:529px;width:56px;height:27px;background:#fd9933;"><div class="c" style="padding-top:2px"><span><span style="color:#fff"><span class="k">澳维超</span></span></span></div></div>
<div class="a" style="left:58px;top:529px;width:74px;height:27px;background:#ffffff;"><div class="c" style="padding-top:2px"><span>24-06-30</span></div></div>
<div class="a" style="left:133px;top:529px;width:85px;height:27px;background:#ffffff;"><div class="c" style="padding-top:2px"><span><span class="g"><span class="k">南墨尔本</span></span></span></div></div>
<div class="a" style="left:219px;top:529px;width:88px;height:27px;background:#ffffff;"><div class="c" style="padding-top:2px"><span><span class="r">1-2</span>(0-1)</span></div></div>
<div class="a" style="left:308px;top:529px;width:38px;height:27px;background:#ffffff;"><div class="c" style="padding-top:2px"><span>10-7</span></div></div>
<div class="a" style="left:347px;top:529px;width:74px;height:27px;background:#ffffff;"><div class="c" style="padding-top:2px"><span><span style="color:#000"><span class="k">欧克莱卡</span></span></span></div></div>
<div class="a" style="left:422px;top:529px;width:38px;height:27px;background:#fdf9f6;"><div class="c" style="padding-top:2px"><span>0.98</span></div></div>
<div class="a" style="left:461px;top:529px;width:81px;height:27px;background:#fdf9f6;"><div class="c" style="padding-top:2px"><span><span class="hb"><span class="k">平</span>/<span class="k">半</span></span></span></div></div>
<div class="a" style="left:543px;top:529px;width:37px;height:27px;background:#fdf9f6;"><div class="c" style="padding-top:2px"><span>0.90</span></div></div>
<div class="a" style="left:581px;top:529px;width:58px;height:27px;background:#eff8fc;"><div class="c" style="padding-top:2px"><span>2.21</span></div></div>
<div class="a" style="left:640px;top:529px;width:58px;height:27px;background:#eff8fc;"><div class="c" style="padding-top:2px"><span><span style="color:#f06a0f;text-decoration:underline">3.47</span></span></div></div>
<div class="a" style="left:699px;top:529px;width:73px;height:27px;background:#eff8fc;"><div class="c" style="padding-top:2px"><span>2.79</span></div></div>
<div class="a" style="left:773px;top:529px;width:39px;height:27px;background:#ffffff;"><div class="c" style="padding-top:2px"><span><span class="g"><span class="k">负</span></span></span></div></div>
<div class="a" style="left:813px;top:529px;width:38px;height:27px;background:#ffffff;"><div class="c" style="padding-top:2px"><span><span class="g"><span class="k">输</span></span></span></div></div>
<div class="a" style="left:852px;top:529px;width:56px;height:27px;background:#ffffff;"><div class="c" style="padding-top:2px"><span><span class="r"><span class="k">大</span></span></span></div></div>
<div class="a" style="left:1px;top:557px;width:56px;height:27px;background:#fd9933;"><div class="c" style="padding-top:2px"><span><span style="color:#fff"><span class="k">澳维超</span></span></span></div></div>
<div class="a" style="left:58px;top:557px;width:74px;height:27px;background:#efefef;"><div class="c" style="padding-top:2px"><span>24-06-21</span></div></div>
<div class="a" style="left:133px;top:557px;width:85px;height:27px;background:#efefef;"><div class="c" style="padding-top:2px"><span><span class="g"><span class="k">南墨尔本</span></span></span></div></div>
<div class="a" style="left:219px;top:557px;width:88px;height:27px;background:#efefef;"><div class="c" style="padding-top:2px"><span><span class="r">4-0</span>(1-0)</span></div></div>
<div class="a" style="left:308px;top:557px;width:38px;height:27px;background:#efefef;"><div class="c" style="padding-top:2px"><span>3-2</span></div></div>
<div class="a" style="left:347px;top:557px;width:74px;height:27px;background:#efefef;"><div class="c" style="padding-top:2px"><span><span style="color:#000"><span class="k">阿东那</span></span></span></div></div>
<div class="a" style="left:422px;top:557px;width:38px;height:27px;background:#fdf9f6;"><div class="c" style="padding-top:2px"><span>0.96</span></div></div>
<div class="a" style="left:461px;top:557px;width:81px;height:27px;background:#fdf9f6;"><div class="c" style="padding-top:2px"><span><span class="hb"><span class="k">球半</span></span></span></div></div>
<div class="a" style="left:543px;top:557px;width:37px;height:27px;background:#fdf9f6;"><div class="c" style="padding-top:2px"><span>0.92</span></div></div>
<div class="a" style="left:581px;top:557px;width:58px;height:27px;background:#eff8fc;"><div class="c" style="padding-top:2px"><span>1.31</span></div></div>
<div class="a" style="left:640px;top:557px;width:58px;height:27px;background:#eff8fc;"><div class="c" style="padding-top:2px"><span><span class="hb">5.12</span></span></div></div>
<div class="a" style="left:699px;top:557px;width:73px;height:27px;background:#eff8fc;"><div class="c" style="padding-top:2px"><span>6.88</span></div></div>
<div class="a" style="left:773px;top:557px;width:39px;height:27px;background:#efefef;"><div class="c" style="padding-top:2px"><span><span class="r"><span class="k">胜</span></span></span></div></div>
<div class="a" style="left:813px;top:557px;width:38px;height:27px;background:#efefef;"><div class="c" style="padding-top:2px"><span><span class="r"><span class="k">赢</span></span></span></div></div>
<div class="a" style="left:852px;top:557px;width:56px;height:27px;background:#efefef;"><div class="c" style="padding-top:2px"><span><span class="r"><span class="k">大</span></span></span></div></div>
<div class="a" style="left:1px;top:585px;width:56px;height:27px;background:#fd9933;"><div class="c" style="padding-top:2px"><span><span style="color:#fff"><span class="k">澳维超</span></span></span></div></div>
<div class="a" style="left:58px;top:585px;width:74px;height:27px;background:#ffffff;"><div class="c" style="padding-top:2px"><span>24-06-16</span></div></div>
<div class="a" style="left:133px;top:585px;width:85px;height:27px;background:#ffffff;"><div class="c" style="padding-top:2px"><span><span style="color:#000"><span class="nb">1</span><span class="k">黑德堡</span></span></span></div></div>
<div class="a" style="left:219px;top:585px;width:88px;height:27px;background:#ffffff;"><div class="c" style="padding-top:2px"><span><span class="r">1-0</span>(1-0)</span></div></div>
<div class="a" style="left:308px;top:585px;width:38px;height:27px;background:#ffffff;"><div class="c" style="padding-top:2px"><span>4-7</span></div></div>
<div class="a" style="left:347px;top:585px;width:74px;height:27px;background:#ffffff;"><div class="c" style="padding-top:2px"><span><span class="g"><span class="k">南墨尔本</span></span></span></div></div>
<div class="a" style="left:422px;top:585px;width:38px;height:27px;background:#fdf9f6;"><div class="c" style="padding-top:2px"><span>0.96</span></div></div>
<div class="a" style="left:461px;top:585px;width:81px;height:27px;background:#fdf9f6;"><div class="c" style="padding-top:2px"><span><span class="hb"><span class="k">平手</span></span></span></div></div>
<div class="a" style="left:543px;top:585px;width:37px;height:27px;background:#fdf9f6;"><div class="c" style="padding-top:2px"><span>0.92</span></div></div>
<div class="a" style="left:581px;top:585px;width:58px;height:27px;background:#eff8fc;"><div class="c" style="padding-top:2px"><span>2.62</span></div></div>
<div class="a" style="left:640px;top:585px;width:58px;height:27px;background:#eff8fc;"><div class="c" style="padding-top:2px"><span><span class="hb">3.31</span></span></div></div>
<div class="a" style="left:699px;top:585px;width:73px;height:27px;background:#eff8fc;"><div class="c" style="padding-top:2px"><span>2.39</span></div></div>
<div class="a" style="left:773px;top:585px;width:39px;height:27px;background:#ffffff;"><div class="c" style="padding-top:2px"><span><span class="g"><span class="k">负</span></span></span></div></div>
<div class="a" style="left:813px;top:585px;width:38px;height:27px;background:#ffffff;"><div class="c" style="padding-top:2px"><span><span class="g"><span class="k">输</span></span></span></div></div>
<div class="a" style="left:852px;top:585px;width:56px;height:27px;background:#ffffff;"><div class="c" style="padding-top:2px"><span><span class="g"><span class="k">小</span></span></span></div></div>
<div class="a" style="left:1px;top:613px;width:56px;height:27px;background:#1fa074;"><div class="c" style="padding-top:2px"><span><span style="color:#fff"><span class="k">澳足总</span></span></span></div></div>
<div class="a" style="left:58px;top:613px;width:74px;height:27px;background:#efefef;"><div class="c" style="padding-top:2px"><span>24-06-12</span></div></div>
<div class="a" style="left:133px;top:613px;width:85px;height:27px;background:#efefef;"><div class="c" style="padding-top:2px"><span><span class="g"><span class="k">南墨尔本</span></span></span></div></div>
<div class="a" style="left:219px;top:613px;width:88px;height:27px;background:#efefef;"><div class="c" style="padding-top:2px"><span><span class="r">1-0</span>(0-0)</span></div></div>
<div class="a" style="left:308px;top:613px;width:38px;height:27px;background:#efefef;"><div class="c" style="padding-top:2px"><span>4-3</span></div></div>
<div class="a" style="left:347px;top:613px;width:74px;height:27px;background:#efefef;"><div class="c" style="padding-top:2px"><span><span style="color:#000"><span class="k">圣奥尔本</span></span></span></div></div>
<div class="a" style="left:422px;top:613px;width:38px;height:27px;background:#fdf9f6;"><div class="c" style="padding-top:2px"><span>1.02</span></div></div>
<div class="a" style="left:461px;top:613px;width:81px;height:27px;background:#fdf9f6;"><div class="c" style="padding-top:2px"><span><span class="hb"><span class="k">两球半</span>/<span class="k">三</span></span></span></div></div>
<div class="a" style="left:543px;top:613px;width:37px;height:27px;background:#fdf9f6;"><div class="c" style="padding-top:2px"><span>0.80</span></div></div>
<div class="a" style="left:581px;top:613px;width:58px;height:27px;background:#eff8fc;"><div class="c" style="padding-top:2px"><span>1.08</span></div></div>
<div class="a" style="left:640px;top:613px;width:58px;height:27px;background:#eff8fc;"><div class="c" style="padding-top:2px"><span><span class="hb">8.99</span></span></div></div>
<div class="a" style="left:699px;top:613px;width:73px;height:27px;background:#eff8fc;"><div class="c" style="padding-top:2px"><span>15.76</span></div></div>
<div class="a" style="left:773px;top:613px;width:39px;height:27px;background:#efefef;"><div class="c" style="padding-top:2px"><span><span class="r"><span class="k">胜</span></span></span></div></div>
<div class="a" style="left:813px;top:613px;width:38px;height:27px;background:#efefef;"><div class="c" style="padding-top:2px"><span><span class="g"><span class="k">输</span></span></span></div></div>
<div class="a" style="left:852px;top:613px;width:56px;height:27px;background:#efefef;"><div class="c" style="padding-top:2px"><span><span class="g"><span class="k">小</span></span></span></div></div>
<div class="a" style="left:1px;top:641px;width:56px;height:27px;background:#fd9933;"><div class="c" style="padding-top:2px"><span><span style="color:#fff"><span class="k">澳维超</span></span></span></div></div>
<div class="a" style="left:58px;top:641px;width:74px;height:27px;background:#ffffff;"><div class="c" style="padding-top:2px"><span>24-06-07</span></div></div>
<div class="a" style="left:133px;top:641px;width:85px;height:27px;background:#ffffff;"><div class="c" style="padding-top:2px"><span><span class="g"><span class="k">南墨尔本</span></span></span></div></div>
<div class="a" style="left:219px;top:641px;width:88px;height:27px;background:#ffffff;"><div class="c" style="padding-top:2px"><span><span class="r">2-0</span>(1-0)</span></div></div>
<div class="a" style="left:308px;top:641px;width:38px;height:27px;background:#ffffff;"><div class="c" style="padding-top:2px"><span>4-2</span></div></div>
<div class="a" style="left:347px;top:641px;width:74px;height:27px;background:#ffffff;"><div class="c" style="padding-top:2px"><span><span style="color:#000"><span class="k">蓝曼宁厄</span></span></span></div></div>
<div class="a" style="left:422px;top:641px;width:38px;height:27px;background:#fdf9f6;"><div class="c" style="padding-top:2px"><span>0.90</span></div></div>
<div class="a" style="left:461px;top:641px;width:81px;height:27px;background:#fdf9f6;"><div class="c" style="padding-top:2px"><span><span class="hb"><span class="k">两球半</span></span></span></div></div>
<div class="a" style="left:543px;top:641px;width:37px;height:27px;background:#fdf9f6;"><div class="c" style="padding-top:2px"><span>0.98</span></div></div>
<div class="a" style="left:581px;top:641px;width:58px;height:27px;background:#eff8fc;"><div class="c" style="padding-top:2px"><span>1.10</span></div></div>
<div class="a" style="left:640px;top:641px;width:58px;height:27px;background:#eff8fc;"><div class="c" style="padding-top:2px"><span><span class="hb">8.59</span></span></div></div>
<div class="a" style="left:699px;top:641px;width:73px;height:27px;background:#eff8fc;"><div class="c" style="padding-top:2px"><span>14.43</span></div></div>
<div class="a" style="left:773px;top:641px;width:39px;height:27px;background:#ffffff;"><div class="c" style="padding-top:2px"><span><span class="r"><span class="k">胜</span></span></span></div></div>
<div class="a" style="left:813px;top:641px;width:38px;height:27px;background:#ffffff;"><div class="c" style="padding-top:2px"><span><span class="g"><span class="k">输</span></span></span></div></div>
<div class="a" style="left:852px;top:641px;width:56px;height:27px;background:#ffffff;"><div class="c" style="padding-top:2px"><span><span class="g"><span class="k">小</span></span></span></div></div>
<div class="a" style="left:1px;top:669px;width:56px;height:27px;background:#fd9933;"><div class="c" style="padding-top:2px"><span><span style="color:#fff"><span class="k">澳维超</span></span></span></div></div>
<div class="a" style="left:58px;top:669px;width:74px;height:27px;background:#efefef;"><div class="c" style="padding-top:2px"><span>24-06-01</span></div></div>
<div class="a" style="left:133px;top:669px;width:85px;height:27px;background:#efefef;"><div class="c" style="padding-top:2px"><span><span style="color:#000"><span class="k">休城</span></span></span></div></div>
<div class="a" style="left:219px;top:669px;width:88px;height:27px;background:#efefef;"><div class="c" style="padding-top:2px"><span><span class="r">0-1</span>(0-0)</span></div></div>
<div class="a" style="left:308px;top:669px;width:38px;height:27px;background:#efefef;"><div class="c" style="padding-top:2px"><span>5-4</span></div></div>
<div class="a" style="left:347px;top:669px;width:74px;height:27px;background:#efefef;"><div class="c" style="padding-top:2px"><span><span class="g"><span class="k">南墨尔本</span></span></span></div></div>
<div class="a" style="left:422px;top:669px;width:38px;height:27px;background:#fdf9f6;"><div class="c" style="padding-top:2px"><span>0.91</span></div></div>
<div class="a" style="left:461px;top:669px;width:81px;height:27px;background:#fdf9f6;"><div class="c" style="padding-top:2px"><span><span class="r">*</span><span class="hb"><span class="k">半球</span></span></span></div></div>
<div class="a" style="left:543px;top:669px;width:37px;height:27px;background:#fdf9f6;"><div class="c" style="padding-top:2px"><span>0.96</span></div></div>
<div class="a" style="left:581px;top:669px;width:58px;height:27px;background:#eff8fc;"><div class="c" style="padding-top:2px"><span>3.41</span></div></div>
<div class="a" style="left:640px;top:669px;width:58px;height:27px;background:#eff8fc;"><div class="c" style="padding-top:2px"><span><span class="hb">3.65</span></span></div></div>
<div class="a" style="left:699px;top:669px;width:73px;height:27px;background:#eff8fc;"><div class="c" style="padding-top:2px"><span>1.87</span></div></div>
<div class="a" style="left:773px;top:669px;width:39px;height:27px;background:#efefef;"><div class="c" style="padding-top:2px"><span><span class="r"><span class="k">胜</span></span></span></div></div>
<div class="a" style="left:813px;top:669px;width:38px;height:27px;background:#efefef;"><div class="c" style="padding-top:2px"><span><span class="r"><span class="k">赢</span></span></span></div></div>
<div class="a" style="left:852px;top:669px;width:56px;height:27px;background:#efefef;"><div class="c" style="padding-top:2px"><span><span class="g"><span class="k">小</span></span></span></div></div>
<div class="a" style="left:1px;top:697px;width:56px;height:27px;background:#fd9933;"><div class="c" style="padding-top:2px"><span><span style="color:#fff"><span class="k">澳维超</span></span></span></div></div>
<div class="a" style="left:58px;top:697px;width:74px;height:27px;background:#ffffff;"><div class="c" style="padding-top:2px"><span>24-05-26</span></div></div>
<div class="a" style="left:133px;top:697px;width:85px;height:27px;background:#ffffff;"><div class="c" style="padding-top:2px"><span><span class="g"><span class="k">南墨尔本</span></span></span></div></div>
<div class="a" style="left:219px;top:697px;width:88px;height:27px;background:#ffffff;"><div class="c" style="padding-top:2px"><span><span class="r">4-2</span>(2-1)</span></div></div>
<div class="a" style="left:308px;top:697px;width:38px;height:27px;background:#ffffff;"><div class="c" style="padding-top:2px"><span>9-7</span></div></div>
<div class="a" style="left:347px;top:697px;width:74px;height:27px;background:#ffffff;"><div class="c" style="padding-top:2px"><span><span style="color:#000"><span class="k">莫兰德城</span></span></span></div></div>
<div class="a" style="left:422px;top:697px;width:38px;height:27px;background:#fdf9f6;"><div class="c" style="padding-top:2px"><span>0.85</span></div></div>
<div class="a" style="left:461px;top:697px;width:81px;height:27px;background:#fdf9f6;"><div class="c" style="padding-top:2px"><span><span class="hb"><span class="k">球半</span>/<span class="k">两</span></span></span></div></div>
<div class="a" style="left:543px;top:697px;width:37px;height:27px;background:#fdf9f6;"><div class="c" style="padding-top:2px"><span>1.03</span></div></div>
<div class="a" style="left:581px;top:697px;width:58px;height:27px;background:#eff8fc;"><div class="c" style="padding-top:2px"><span>1.20</span></div></div>
<div class="a" style="left:640px;top:697px;width:58px;height:27px;background:#eff8fc;"><div class="c" style="padding-top:2px"><span><span class="hb">6.13</span></span></div></div>
<div class="a" style="left:699px;top:697px;width:73px;height:27px;background:#eff8fc;"><div class="c" style="padding-top:2px"><span>9.73</span></div></div>
<div class="a" style="left:773px;top:697px;width:39px;height:27px;background:#ffffff;"><div class="c" style="padding-top:2px"><span><span class="r"><span class="k">胜</span></span></span></div></div>
<div class="a" style="left:813px;top:697px;width:38px;height:27px;background:#ffffff;"><div class="c" style="padding-top:2px"><span><span class="r"><span class="k">赢</span></span></span></div></div>
<div class="a" style="left:852px;top:697px;width:56px;height:27px;background:#ffffff;"><div class="c" style="padding-top:2px"><span><span class="r"><span class="k">大</span></span></span></div></div>
<div class="a" style="left:1px;top:725px;width:56px;height:27px;background:#1fa074;"><div class="c" style="padding-top:2px"><span><span style="color:#fff"><span class="k">澳足总</span></span></span></div></div>
<div class="a" style="left:58px;top:725px;width:74px;height:27px;background:#efefef;"><div class="c" style="padding-top:2px"><span>24-05-21</span></div></div>
<div class="a" style="left:133px;top:725px;width:85px;height:27px;background:#efefef;"><div class="c" style="padding-top:2px"><span><span style="color:#000"><span class="nb">1</span><span class="k">普雷斯顿</span></span></span></div></div>
<div class="a" style="left:219px;top:725px;width:88px;height:27px;background:#efefef;"><div class="c" style="padding-top:2px"><span><span class="r">2-5</span>(1-1)</span></div></div>
<div class="a" style="left:308px;top:725px;width:38px;height:27px;background:#efefef;"><div class="c" style="padding-top:2px"><span>2-9</span></div></div>
<div class="a" style="left:347px;top:725px;width:74px;height:27px;background:#efefef;"><div class="c" style="padding-top:2px"><span><span class="g"><span class="k">南墨尔本</span></span></span></div></div>
<div class="a" style="left:422px;top:725px;width:38px;height:27px;background:#fdf9f6;"><div class="c" style="padding-top:2px"><span>0.94</span></div></div>
<div class="a" style="left:461px;top:725px;width:81px;height:27px;background:#fdf9f6;"><div class="c" style="padding-top:2px"><span><span class="r">*</span><span class="hb"><span class="k">球半</span></span></span></div></div>
<div class="a" style="left:543px;top:725px;width:37px;height:27px;background:#fdf9f6;"><div class="c" style="padding-top:2px"><span>0.88</span></div></div>
<div class="a" style="left:581px;top:725px;width:58px;height:27px;background:#eff8fc;"><div class="c" style="padding-top:2px"><span>5.90</span></div></div>
<div class="a" style="left:640px;top:725px;width:58px;height:27px;background:#eff8fc;"><div class="c" style="padding-top:2px"><span><span class="hb">5.39</span></span></div></div>
<div class="a" style="left:699px;top:725px;width:73px;height:27px;background:#eff8fc;"><div class="c" style="padding-top:2px"><span>1.35</span></div></div>
<div class="a" style="left:773px;top:725px;width:39px;height:27px;background:#efefef;"><div class="c" style="padding-top:2px"><span><span class="r"><span class="k">胜</span></span></span></div></div>
<div class="a" style="left:813px;top:725px;width:38px;height:27px;background:#efefef;"><div class="c" style="padding-top:2px"><span><span class="r"><span class="k">赢</span></span></span></div></div>
<div class="a" style="left:852px;top:725px;width:56px;height:27px;background:#efefef;"><div class="c" style="padding-top:2px"><span><span class="r"><span class="k">大</span></span></span></div></div>
<div class="a" style="left:1px;top:753px;width:907px;height:27px;background:#fff;"><div class="c" style="padding-top:2px"><span><span style="word-spacing:1.25px"><span class="k">近</span><span class="r">10</span><span class="k">场</span>,<span class="k">胜</span>8<span class="k">平</span>0<span class="k">负</span>2, <span class="k">胜率</span><span style="letter-spacing:1px">:</span><span style="display:inline-block;background:#f00;color:#fff;padding:0 4px;height:18px;line-height:20px;font-size:13px;position:relative;top:-1.5px;vertical-align:top">80%</span> <span class="k">赢率</span><span style="letter-spacing:1px">:</span><span class="b">50%</span> <span class="k">大</span><span style="letter-spacing:1px">:</span><span class="b">50%</span> <span class="k">单率</span><span style="letter-spacing:1px">:</span><span class="r">70%</span></span></span></div></div>
</body></html>
